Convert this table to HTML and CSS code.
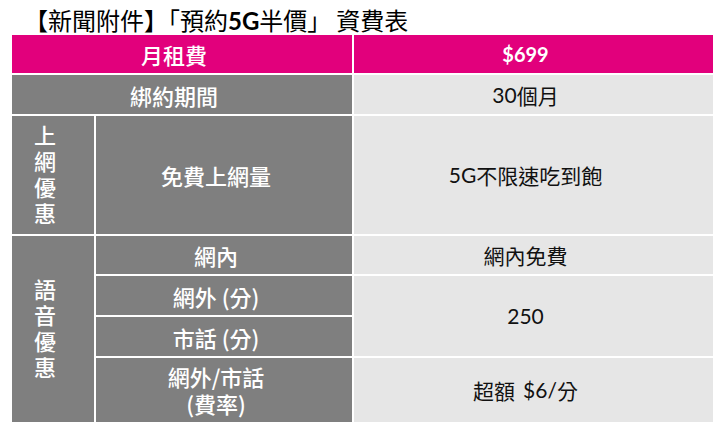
FILE: index.html
```html
<!DOCTYPE html>
<html lang="zh-Hant">
<head>
<meta charset="utf-8">
<title>預約5G半價 資費表</title>
<link rel="stylesheet" href="styles.css">
</head>
<body>
<h1 class="title">【新聞附件】「預約<span class="en-bold">5G</span>半價」<span class="title-tail">資費表</span></h1>
<div class="rate-table">
  <div class="cell head c-left r1">月租費</div>
  <div class="cell head price c-right r1">$699</div>

  <div class="cell label c-left r2">綁約期間</div>
  <div class="cell value c-right r2"><span class="en">30</span>個月</div>

  <div class="cell label c-group r3"><span class="vertical">上網優惠</span></div>
  <div class="cell label c-item r3">免費上網量</div>
  <div class="cell value c-right r3"><span class="en">5G</span>不限速吃到飽</div>

  <div class="cell label c-group r-voice"><span class="vertical">語音優惠</span></div>
  <div class="cell label c-item r4">網內</div>
  <div class="cell value c-right r4">網內免費</div>

  <div class="cell label c-item r5">網外 (分)</div>
  <div class="cell value c-right r5-6"><span class="en">250</span></div>

  <div class="cell label c-item r6">市話 (分)</div>

  <div class="cell label c-item r7">網外/市話<br>(費率)</div>
  <div class="cell value c-right r7">超額<span class="en gap">$6/</span>分</div>
</div>
</body>
</html>
```

FILE: styles.css
```css
html, body {
  margin: 0;
  padding: 0;
  background: #ffffff;
}

body {
  width: 720px;
  height: 429px;
  overflow: hidden;
  font-family: "Noto Sans CJK TC", "Noto Sans", sans-serif;
}

.title {
  margin: 0;
  padding: 8px 0 0 24px;
  height: 27px;
  font-size: 24px;
  line-height: 24px;
  font-weight: 400;
  color: #000000;
  white-space: nowrap;
}

.title-tail {
  margin-left: 5px;
}

.en-bold {
  font-family: "Lato", "Noto Sans", sans-serif;
  font-weight: 700;
}

.rate-table {
  margin-left: 12px;
  width: 701px;
  display: grid;
  grid-template-columns: 82px 256px 359px;
  grid-template-rows: 38px 39px 118px 38px 39px 39px 64px;
  gap: 2px;
  background: #ffffff;
}

/* placement */
.c-left { grid-column: 1 / 3; }
.c-group { grid-column: 1; }
.c-item { grid-column: 2; }
.c-right { grid-column: 3; }
.r1 { grid-row: 1; }
.r2 { grid-row: 2; }
.r3 { grid-row: 3; }
.r4 { grid-row: 4; }
.r5 { grid-row: 5; }
.r6 { grid-row: 6; }
.r7 { grid-row: 7; }
.r5-6 { grid-row: 5 / 7; }
.r-voice { grid-row: 4 / 8; }

.cell {
  display: flex;
  align-items: center;
  justify-content: center;
  text-align: center;
  padding-right: 16px;
  font-size: 22px;
  line-height: 26px;
}

.vertical {
  writing-mode: vertical-rl;
  letter-spacing: 4px;
  line-height: 22px;
  padding-top: 4px;
}

.head {
  background: #e2007c;
  color: #ffffff;
  font-weight: 500;
}

.price {
  font-family: "Lato", "Noto Sans", sans-serif;
  font-size: 20px;
  font-weight: 700;
}

.label {
  background: #7f7f7f;
  color: #ffffff;
  font-weight: 500;
}

.value {
  background: #e6e6e6;
  color: #111111;
  font-weight: 400;
  font-size: 21px;
}

.en {
  font-family: "Lato", "Noto Sans", sans-serif;
}

.gap {
  margin-left: 8px;
}

.r7.label {
  line-height: 27px;
}
```
